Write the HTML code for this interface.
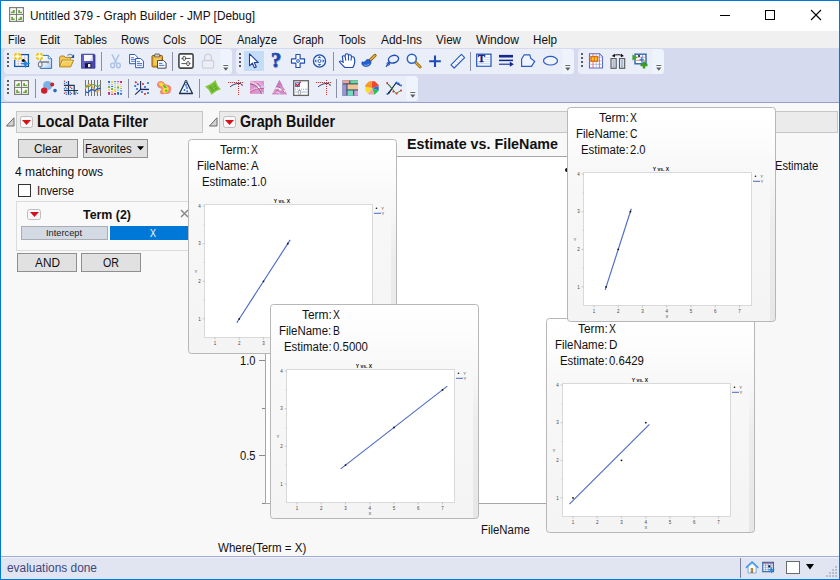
<!DOCTYPE html>
<html><head><meta charset="utf-8"><title>Untitled 379 - Graph Builder - JMP</title>
<style>
html,body{margin:0;padding:0;width:840px;height:580px;overflow:hidden;background:#f7f7f7;font-family:'Liberation Sans', sans-serif;}
.t{position:absolute;white-space:pre;transform-origin:0 0;color:#111}
svg{overflow:visible}
</style></head><body>
<div style="position:relative;width:840px;height:580px;overflow:hidden">
<div style="position:absolute;left:0;top:0;width:840px;height:580px;background:#0078d7"></div>
<div style="position:absolute;left:1px;top:1px;width:838px;height:30px;background:#fff"></div>
<div style="position:absolute;left:1px;top:31px;width:838px;height:17px;background:#f0f0f0"></div>
<div style="position:absolute;left:1px;top:48px;width:838px;height:54px;background:#d5daee"></div>
<div style="position:absolute;left:1px;top:102px;width:838px;height:1px;background:#939fce"></div>
<div style="position:absolute;left:1px;top:103px;width:838px;height:453px;background:#f8f8f8"></div>
<div style="position:absolute;left:1px;top:556px;width:838px;height:1px;background:#a0a9d2"></div>
<div style="position:absolute;left:1px;top:557px;width:838px;height:22px;background:#e0e5f1"></div>
<div style="position:absolute;left:1px;top:557px;width:838px;height:1px;background:#f0f3fa"></div>
<svg style="position:absolute;left:9px;top:7px" width="16" height="16" viewBox="0 0 16 16"><rect x=".6" y=".6" width="13.8" height="13.8" fill="#fff" stroke="#7d7d7d" stroke-width="1.2"/><path d="M7.5 .6v13.8M.6 7.5h13.8" stroke="#7d7d7d" stroke-width="1.2"/><path d="M2.2 6.2V4.6h1.6V3h1.9v3.2zM9.2 6.2V3h1.8v1.7h1.9v1.5zM2.2 13V9.8h1.8v1.6h1.7V13zM9.2 13v-1.6h1.6V9.8h2.1V13z" fill="#6aa636"/></svg>
<span class="t" style="left:30.0px;top:10.34px;font-size:12px;line-height:12px;transform:scaleX(0.9844)">Untitled 379 - Graph Builder - JMP [Debug]</span>
<svg style="position:absolute;left:700px;top:0" width="140" height="31" viewBox="0 0 140 31"><path d="M20 15.5h10" stroke="#000" stroke-width="1" fill="none"/><rect x="65.5" y="10.5" width="9" height="9" stroke="#000" fill="none"/><path d="M111 10l10 10M121 10l-10 10" stroke="#000" stroke-width="1.1" fill="none"/></svg>
<span class="t" style="left:8.3px;top:34.34px;font-size:12px;line-height:12px;transform:scaleX(0.9150)">File</span>
<span class="t" style="left:40.0px;top:34.34px;font-size:12px;line-height:12px;transform:scaleX(0.9668)">Edit</span>
<span class="t" style="left:74.0px;top:34.34px;font-size:12px;line-height:12px;transform:scaleX(0.9514)">Tables</span>
<span class="t" style="left:121.0px;top:34.34px;font-size:12px;line-height:12px;transform:scaleX(0.9328)">Rows</span>
<span class="t" style="left:163.0px;top:34.34px;font-size:12px;line-height:12px;transform:scaleX(0.9577)">Cols</span>
<span class="t" style="left:200.0px;top:34.34px;font-size:12px;line-height:12px;transform:scaleX(0.8456)">DOE</span>
<span class="t" style="left:237.0px;top:34.34px;font-size:12px;line-height:12px;transform:scaleX(0.9367)">Analyze</span>
<span class="t" style="left:292.7px;top:34.34px;font-size:12px;line-height:12px;transform:scaleX(0.9173)">Graph</span>
<span class="t" style="left:339.3px;top:34.34px;font-size:12px;line-height:12px;transform:scaleX(0.9530)">Tools</span>
<span class="t" style="left:380.7px;top:34.34px;font-size:12px;line-height:12px;transform:scaleX(0.9913)">Add-Ins</span>
<span class="t" style="left:436.0px;top:34.34px;font-size:12px;line-height:12px;transform:scaleX(0.9691)">View</span>
<span class="t" style="left:475.7px;top:34.34px;font-size:12px;line-height:12px;transform:scaleX(1.0073)">Window</span>
<span class="t" style="left:533.3px;top:34.34px;font-size:12px;line-height:12px;transform:scaleX(0.9722)">Help</span>
<div style="position:absolute;left:4px;top:48.5px;width:228px;height:25.5px;background:linear-gradient(90deg,#e9eef9 0,#e9eef9 calc(100% - 12px),#eef4fc calc(100% - 11px));border-radius:3.5px"></div>
<div style="position:absolute;left:7px;top:53px;width:2px;height:2px;background:#5c5c62"></div>
<div style="position:absolute;left:7px;top:57px;width:2px;height:2px;background:#5c5c62"></div>
<div style="position:absolute;left:7px;top:61px;width:2px;height:2px;background:#5c5c62"></div>
<div style="position:absolute;left:7px;top:65px;width:2px;height:2px;background:#5c5c62"></div>
<svg style="position:absolute;left:14px;top:53px" width="16" height="16" viewBox="0 0 16 16"><rect x=".7" y="1.600" width="13.700" height="11.800" fill="#fff" stroke="#1254a4" stroke-width="1.300"/><path d="M.7 5.200h13.700M.7 8.200h13.700M.7 10.800h13.700" stroke="#f2a0a0" stroke-width=".5"/><path d="M4.200 1.600v11.800M7.500 1.600v11.800M10.800 1.600v11.800" stroke="#86aae4" stroke-width=".5"/><path d="M11.400 6.800l1.300 2.700 3.900 1.100-3.900 1.200-1.300 3.700-1.300-3.700-4-1.200 4-1.100z" fill="#2284dc"/><circle cx="9.400" cy="7.400" r="1.500" fill="#0a0a0a"/><rect x="0" y="0" width="7" height="6.800" fill="#f2d348"/><path d="M3.500 -.3v7.400M-.3 3.400h7.600M.2 .2l6.600 6.400M6.800 .2L.2 6.600" stroke="#fffbe0" stroke-width=".8"/><path d="M1.800 0L2.600 2 .0 1.600M5.200 0L4.400 2 7 1.600M1.800 6.800L2.600 4.800 0 5.200M5.200 6.800L4.400 4.800 7 5.200" fill="#e9bf20"/><circle cx="3.500" cy="3.400" r="1.300" fill="#fffdf0"/></svg>
<svg style="position:absolute;left:36px;top:53px" width="16" height="16" viewBox="0 0 16 16"><defs><linearGradient id="pgA" x1="0" y1="0" x2="1" y2="1"><stop offset="0" stop-color="#fff"/><stop offset=".5" stop-color="#e4effa"/><stop offset="1" stop-color="#a8caee"/></linearGradient></defs><path d="M4.300 2.400h8l3.300 3.300v9.700H4.300z" fill="url(#pgA)" stroke="#2f72c2" stroke-width="1"/><path d="M12.300 2.400v3.300h3.300" fill="#f4f9fe" stroke="#2f72c2" stroke-width=".8"/><path d="M4.400 9h8.700" stroke="#7a7e86" stroke-width="1.600"/><path d="M11 9.900h2.200" stroke="#9a9ea6" stroke-width=".8"/><ellipse cx="4.200" cy="11.500" rx="1.900" ry="2.500" fill="#eef1f6" stroke="#787c84" stroke-width="1.100"/><path d="M4.300 6v3" stroke="#9a9ea6" stroke-width="1"/><rect x="0" y="0" width="7" height="6.800" fill="#f2d348"/><path d="M3.500 -.3v7.400M-.3 3.400h7.600M.2 .2l6.600 6.400M6.800 .2L.2 6.600" stroke="#fffbe0" stroke-width=".8"/><path d="M1.800 0L2.600 2 .0 1.600M5.200 0L4.400 2 7 1.600M1.800 6.800L2.600 4.800 0 5.200M5.200 6.800L4.400 4.800 7 5.200" fill="#e9bf20"/><circle cx="3.500" cy="3.400" r="1.300" fill="#fffdf0"/></svg>
<svg style="position:absolute;left:59px;top:53px" width="16" height="16" viewBox="0 0 16 16"><g transform="translate(-.9 -.3)"><path d="M1.500 14V4.500l1-1.200h3.600l1 1.400h5.400V7" fill="#f1c95a" stroke="#a97a1c" stroke-width=".9"/><path d="M1.500 14.200l2.600-6.700h11.400L12.600 14.200z" fill="#f6cf5a" stroke="#a97a1c" stroke-width=".9"/><path d="M3 13l2-4.600h9" stroke="#fbe9a6" stroke-width=".8" fill="none"/><path d="M3 13.600h9.200" stroke="#e0a020" stroke-width=".9"/><path d="M9.400 2.800c1.800-1.800 4.200-1.500 5.400.5" stroke="#7c98bc" stroke-width="1.200" fill="none"/><path d="M16 1.600v3.600h-3.400z" fill="#1c4c9c"/></g></svg>
<svg style="position:absolute;left:80px;top:53px" width="16" height="16" viewBox="0 0 16 16"><defs><linearGradient id="svA" x1="0" y1="0" x2="1" y2="0"><stop offset="0" stop-color="#6464cc"/><stop offset="1" stop-color="#4444a8"/></linearGradient></defs><path d="M1.500 1.200h12.800l.7.700v13.300H1.500z" fill="url(#svA)" stroke="#3a3a9c" stroke-width=".8"/><rect x="4" y="2" width="8.600" height="6" fill="#f6f6fb"/><path d="M9 8l3.600-4v4z" fill="#d4d8e8"/><rect x="5" y="10.200" width="6.400" height="4.600" fill="#14142c"/><rect x="8" y="11" width="2.400" height="3.200" fill="#f0f0f6"/><rect x="13.300" y="2.600" width=".9" height=".9" fill="#2c2c7c"/></svg>
<div style="position:absolute;left:101px;top:52px;width:1px;height:19px;background:#8a8fa8"></div>
<svg style="position:absolute;left:108px;top:53px" width="16" height="16" viewBox="0 0 16 16"><path d="M4 1.5l4.6 9M11 1.5l-4.6 9" stroke="#a9c1e6" stroke-width="1.5" fill="none"/><ellipse cx="4.6" cy="12.4" rx="1.9" ry="2.3" fill="none" stroke="#a9c1e6" stroke-width="1.4"/><ellipse cx="10.4" cy="12.4" rx="1.9" ry="2.3" fill="none" stroke="#a9c1e6" stroke-width="1.4"/></svg>
<svg style="position:absolute;left:129px;top:53px" width="16" height="16" viewBox="0 0 16 16"><path d="M0.6 1.5h5.2l2.6 2.6v6.6h-7.8z" fill="#fff" stroke="#2c5cb4" stroke-width="1"/><path d="M2.0 4.7h3M2.0 6.5h5M2.0 8.3h5" stroke="#3a6cc4" stroke-width=".9"/><path d="M6.6 5.5h5.2l2.6 2.6v6.6h-7.8z" fill="#fff" stroke="#2c5cb4" stroke-width="1"/><path d="M8.0 8.7h3M8.0 10.5h5M8.0 12.3h5" stroke="#3a6cc4" stroke-width=".9"/></svg>
<svg style="position:absolute;left:151px;top:53px" width="16" height="16" viewBox="0 0 16 16"><rect x="1" y="2.5" width="10.5" height="11.5" rx="1" fill="#e4aa2c" stroke="#8a5a10" stroke-width="1"/><rect x="3.6" y="1" width="5.2" height="3" rx=".8" fill="#c9c9c9" stroke="#5a4a30" stroke-width=".8"/><rect x="2.6" y="4.6" width="7.2" height="7.5" fill="#f3c95a"/><path d="M6.5 7.5h6l2.6 2.4v5.3h-8.6z" fill="#f4f6fa" stroke="#4a4a58" stroke-width="1"/><path d="M8 10.4h3.4M8 12.4h5.4" stroke="#3a6cc4" stroke-width=".9"/></svg>
<div style="position:absolute;left:172px;top:52px;width:1px;height:19px;background:#8a8fa8"></div>
<svg style="position:absolute;left:178px;top:53px" width="16" height="16" viewBox="0 0 16 16"><rect x=".9" y=".9" width="14.2" height="14.2" rx="1.6" fill="#fff" stroke="#464646" stroke-width="1.6"/><path d="M3.4 5.4h9.2M3.4 10.6h9.2" stroke="#555" stroke-width="1"/><rect x="5" y="3.4" width="2.4" height="4" rx="1" fill="#fff" stroke="#444" stroke-width="1"/><rect x="8.8" y="8.6" width="2.4" height="4" rx="1" fill="#fff" stroke="#444" stroke-width="1"/></svg>
<svg style="position:absolute;left:200px;top:53px" width="16" height="16" viewBox="0 0 16 16"><path d="M4.6 7.5V4.6a3.4 3.4 0 0 1 6.8 0V7.5" fill="none" stroke="#cfd0da" stroke-width="1.3"/><rect x="2.4" y="7.5" width="11.2" height="7.6" rx="1" fill="#eceef6" stroke="#cfd0da" stroke-width="1.3"/></svg>
<svg style="position:absolute;left:223px;top:64.5px" width="6" height="7" viewBox="0 0 6 7"><path d="M.3 .6h5" stroke="#fff" stroke-width="2.400" opacity=".7"/><path d="M.3 .5h5" stroke="#666"/><path d="M.2 2.400h5.200L2.800 5.800z" fill="#5e5e5e"/></svg>
<div style="position:absolute;left:236px;top:48.5px;width:338px;height:25.5px;background:linear-gradient(90deg,#e9eef9 0,#e9eef9 calc(100% - 12px),#eef4fc calc(100% - 11px));border-radius:3.5px"></div>
<div style="position:absolute;left:239px;top:53px;width:2px;height:2px;background:#5c5c62"></div>
<div style="position:absolute;left:239px;top:57px;width:2px;height:2px;background:#5c5c62"></div>
<div style="position:absolute;left:239px;top:61px;width:2px;height:2px;background:#5c5c62"></div>
<div style="position:absolute;left:239px;top:65px;width:2px;height:2px;background:#5c5c62"></div>
<div style="position:absolute;left:244px;top:51px;width:20px;height:20px;background:#c5dcf7"></div>
<svg style="position:absolute;left:246px;top:53px" width="16" height="16" viewBox="0 0 16 16"><path d="M3.5 .8v12l2.9-2.6 2 4.6 1.9-.8-2-4.5h3.9z" fill="#fff" stroke="#1c3fa0" stroke-width="1.1" stroke-linejoin="round"/></svg>
<svg style="position:absolute;left:268px;top:53px" width="16" height="16" viewBox="0 0 16 16"><text x="8.6" y="14.6" font-family="'Liberation Serif',serif" font-weight="bold" font-size="20.5" text-anchor="middle" fill="#b9bccb" stroke="#b9bccb" stroke-width=".7">?</text><text x="8" y="14" font-family="'Liberation Serif',serif" font-weight="bold" font-size="20.5" text-anchor="middle" fill="#1a49b4" stroke="#1a49b4" stroke-width=".7">?</text></svg>
<svg style="position:absolute;left:290px;top:53px" width="16" height="16" viewBox="0 0 16 16"><path d="M5.900 1.500h4.200v4.400h4.400v4.200h-4.400v4.400H5.900v-4.400H1.500V5.900h4.400z" fill="#fff" stroke="#1c4cb4" stroke-width="1.150" stroke-linejoin="round"/><circle cx="8" cy="8" r="1.400" fill="#e4eefc" stroke="#1c4cb4" stroke-width=".9"/></svg>
<svg style="position:absolute;left:311px;top:53px" width="16" height="16" viewBox="0 0 16 16"><circle cx="8.500" cy="8" r="6.100" fill="#edf3fd" stroke="#1c4cb4" stroke-width="1.250"/><circle cx="8.500" cy="8" r="1.500" fill="#fff" stroke="#1c4cb4" stroke-width=".9"/><path d="M8.500 2.900l1.700 2h-3.400zM8.500 13.100l1.700-2h-3.400zM3.400 8l2-1.700v3.400zM13.600 8l-2-1.700v3.400z" fill="#2a5cc0"/></svg>
<div style="position:absolute;left:333px;top:52px;width:1px;height:19px;background:#8a8fa8"></div>
<svg style="position:absolute;left:339px;top:53px" width="16" height="16" viewBox="0 0 16 16"><g transform="translate(-.4 0) scale(1.18 1)"><path d="M5.200 14.600C4 12.400 1.600 10.800 .7 8.600c.9-1.100 2.200-.5 3.200.9L3.200 3.600c.4-1.200 1.800-1.200 2.200-.1L5.800 1.500c.5-1.100 2-1.100 2.400 0l.2 1c.6-1 2.100-.9 2.400.3l.1 1.500c.7-.9 2.100-.7 2.400.5.700 3.400.5 6.600-1.300 9.800z" fill="#fff" stroke="#1c4cb4" stroke-width="1" stroke-linejoin="round"/><path d="M5.600 3.600l.5 4M8.300 2.600l.1 4.800M10.800 4.200l-.3 3.400" stroke="#1c4cb4" stroke-width=".9"/></g></svg>
<svg style="position:absolute;left:361px;top:53px" width="16" height="16" viewBox="0 0 16 16"><path d="M9.200 7.200L14 2.400" stroke="#8a5a10" stroke-width="3.200" stroke-linecap="round"/><path d="M9.400 7L13.800 2.600" stroke="#e8b030" stroke-width="1.700" stroke-linecap="round"/><path d="M1.200 8.800c1.300 1 2.800.3 3.600-1.200 1.700-2.400 5.500-.6 5.200 2.200-.4 3.200-4.400 4.200-7 3.300-1.700-.6-2.700-2.500-1.800-4.300z" fill="#1f62d4" stroke="#143c9c" stroke-width=".7"/><path d="M3 11.800c1.600.9 4 .6 5.200-.8" stroke="#7fb0f2" stroke-width="1" fill="none"/></svg>
<svg style="position:absolute;left:384px;top:53px" width="16" height="16" viewBox="0 0 16 16"><ellipse cx="9.500" cy="6.200" rx="5.200" ry="3.700" transform="rotate(-18 9.500 6.200)" fill="none" stroke="#1c4cb4" stroke-width="1.400"/><path d="M5.600 9.200L2 13.800" stroke="#1c4cb4" stroke-width="1.300"/><circle cx="4.400" cy="10.800" r="1.400" fill="none" stroke="#1c4cb4" stroke-width="1"/></svg>
<svg style="position:absolute;left:406px;top:53px" width="16" height="16" viewBox="0 0 16 16"><path d="M9 8.800l5.200 5.200" stroke="#8a5a10" stroke-width="2.800" stroke-linecap="round"/><path d="M9.200 9l5 5" stroke="#e8b030" stroke-width="1.300" stroke-linecap="round"/><circle cx="5.800" cy="5.800" r="4.500" fill="#f2f8ff" stroke="#2a62c4" stroke-width="1.500"/></svg>
<svg style="position:absolute;left:427px;top:53px" width="16" height="16" viewBox="0 0 16 16"><path d="M8 2.400v11.600M2.200 8.200h11.600" stroke="#1c4cb4" stroke-width="2.100"/></svg>
<svg style="position:absolute;left:450px;top:53px" width="16" height="16" viewBox="0 0 16 16"><path d="M1 11.800L11.400 1.400l3.200 3.200L4.200 15z" fill="#fff" stroke="#2a5cc0" stroke-width="1.200" stroke-linejoin="round"/><path d="M4.400 10.600l1.200 1.200M6.400 8.600l1.200 1.200M8.400 6.600l1.200 1.200M10.400 4.600l1.200 1.200" stroke="#7fa0dc" stroke-width=".7"/></svg>
<div style="position:absolute;left:470px;top:52px;width:1px;height:19px;background:#8a8fa8"></div>
<svg style="position:absolute;left:476px;top:53px" width="16" height="16" viewBox="0 0 16 16"><rect x=".7" y="1.200" width="14.300" height="12" fill="#fff" stroke="#2a5cc0" stroke-width="1.300"/><path d="M8.500 4.500h5.500M8.500 6.500h5.500M2 8.500h12M2 10.500h12M2 12.200h12" stroke="#c6d6f0" stroke-width=".9"/><text x="5.400" y="9" font-family="'Liberation Serif',serif" font-weight="bold" font-size="10.500" text-anchor="middle" fill="#101c80" stroke="#101c80" stroke-width=".4">T</text></svg>
<svg style="position:absolute;left:498px;top:53px" width="16" height="16" viewBox="0 0 16 16"><path d="M1 3.200h14" stroke="#14288c" stroke-width="2.600"/><path d="M1 7.400h14" stroke="#14288c" stroke-width="1.500"/><path d="M1 11.200h12" stroke="#14288c" stroke-width="1.100"/><path d="M11.800 8.600l4 2.600-4 2.600z" fill="#14288c"/></svg>
<svg style="position:absolute;left:520px;top:53px" width="16" height="16" viewBox="0 0 16 16"><path d="M4.200 1.800h5.600l.9 3.400 4 3.200-3.200 5H1.600V6z" fill="#f0f5fd" stroke="#2a5cc0" stroke-width="1.200" stroke-linejoin="round"/></svg>
<svg style="position:absolute;left:542px;top:53px" width="16" height="16" viewBox="0 0 16 16"><ellipse cx="8.500" cy="7.700" rx="7" ry="4.300" fill="#eef3fc" stroke="#2a5cc0" stroke-width="1.200"/></svg>
<svg style="position:absolute;left:565.3px;top:64.5px" width="6" height="7" viewBox="0 0 6 7"><path d="M.3 .6h5" stroke="#fff" stroke-width="2.400" opacity=".7"/><path d="M.3 .5h5" stroke="#666"/><path d="M.2 2.400h5.200L2.800 5.800z" fill="#5e5e5e"/></svg>
<div style="position:absolute;left:578px;top:48.5px;width:86px;height:25.5px;background:linear-gradient(90deg,#e9eef9 0,#e9eef9 calc(100% - 12px),#eef4fc calc(100% - 11px));border-radius:3.5px"></div>
<div style="position:absolute;left:581px;top:53px;width:2px;height:2px;background:#5c5c62"></div>
<div style="position:absolute;left:581px;top:57px;width:2px;height:2px;background:#5c5c62"></div>
<div style="position:absolute;left:581px;top:61px;width:2px;height:2px;background:#5c5c62"></div>
<div style="position:absolute;left:581px;top:65px;width:2px;height:2px;background:#5c5c62"></div>
<svg style="position:absolute;left:588px;top:53px" width="16" height="16" viewBox="0 0 16 16"><path d="M1.500 .700h10l3 3v11.300h-13z" fill="#fff" stroke="#5a68c8" stroke-width="1.100"/><path d="M1.500 4.300h13M1.500 7.800h13M1.500 11.300h13" stroke="#9fb4e8" stroke-width=".8"/><path d="M5 .700v14.300M11.400 .700v14.300" stroke="#e05050" stroke-width=".8"/><path d="M8.200 .700v14.300" stroke="#9fb4e8" stroke-width=".8"/><rect x="3" y="3.600" width="6.600" height="4.600" fill="#f7d020" stroke="#e06a18" stroke-width="1.400"/><path d="M6.300 3.600v4.600" stroke="#e06a18" stroke-width="1"/></svg>
<svg style="position:absolute;left:610px;top:53px" width="16" height="16" viewBox="0 0 16 16"><rect x="1" y="5.600" width="5.200" height="9.700" fill="#dfeaf8" stroke="#555" stroke-width="1.100"/><path d="M2.5 8h2.200M2.5 10h2.200M2.5 12h2.200M2.5 13.800h2.200" stroke="#6a7a94" stroke-width=".8"/><rect x="9.5" y="5.600" width="5.200" height="9.700" fill="#dfeaf8" stroke="#555" stroke-width="1.100"/><path d="M11.0 8h2.200M11.0 10h2.200M11.0 12h2.200M11.0 13.800h2.200" stroke="#6a7a94" stroke-width=".8"/><path d="M3.600 2.400c2.600-.9 6-.9 8.600 0" stroke="#111" stroke-width="1" fill="none"/><path d="M1.800 3l3-2.200.2 3.400zM14 3l-3-2.200-.2 3.400z" fill="#111"/></svg>
<svg style="position:absolute;left:632px;top:53px" width="16" height="16" viewBox="0 0 16 16"><rect x="3" y="1.200" width="11" height="9.600" fill="#fff" stroke="#1d5ba8" stroke-width="1.300"/><path d="M3 4.200h11M3 7.400h11" stroke="#e36a6a" stroke-width=".7"/><path d="M10.600 1.200v9.600" stroke="#5a8ad0" stroke-width=".7"/><path d="M.4 1.400l5.200 3-5.200 3z" fill="#3aa52a"/><path d="M9.400 3.600l.8 2.400 2.600.4-2.400 1-.6 2.800-.9-2.600-2.700-.5 2.500-1z" fill="#2f86d6"/><circle cx="7" cy="3" r="1" fill="#111"/><path d="M12 8.600v7M8.500 12.100h7" stroke="#3a9a22" stroke-width="2.500"/></svg>
<svg style="position:absolute;left:655.5px;top:64.5px" width="6" height="7" viewBox="0 0 6 7"><path d="M.3 .6h5" stroke="#fff" stroke-width="2.400" opacity=".7"/><path d="M.3 .5h5" stroke="#666"/><path d="M.2 2.400h5.200L2.800 5.800z" fill="#5e5e5e"/></svg>
<div style="position:absolute;left:4px;top:76px;width:414px;height:24.5px;background:linear-gradient(90deg,#e9eef9 0,#e9eef9 calc(100% - 12px),#eef4fc calc(100% - 11px));border-radius:3.5px"></div>
<div style="position:absolute;left:7px;top:80px;width:2px;height:2px;background:#5c5c62"></div>
<div style="position:absolute;left:7px;top:84px;width:2px;height:2px;background:#5c5c62"></div>
<div style="position:absolute;left:7px;top:88px;width:2px;height:2px;background:#5c5c62"></div>
<div style="position:absolute;left:7px;top:92px;width:2px;height:2px;background:#5c5c62"></div>
<svg style="position:absolute;left:14px;top:80px" width="16" height="16" viewBox="0 0 16 16"><rect x=".6" y=".6" width="13.8" height="13.8" fill="#fff" stroke="#7d7d7d" stroke-width="1.2"/><path d="M7.5 .6v13.8M.6 7.5h13.8" stroke="#7d7d7d" stroke-width="1.2"/><path d="M2.2 6.2V4.6h1.6V3h1.9v3.2zM9.2 6.2V3h1.8v1.7h1.9v1.5zM2.2 13V9.8h1.8v1.6h1.7V13zM9.2 13v-1.6h1.6V9.8h2.1V13z" fill="#6aa636"/></svg>
<div style="position:absolute;left:35px;top:79px;width:1px;height:19px;background:#8a8fa8"></div>
<svg style="position:absolute;left:41px;top:80px" width="16" height="16" viewBox="0 0 16 16"><circle cx="6.700" cy="5.600" r="4.600" fill="#7db2e8"/><circle cx="3.200" cy="10.600" r="3.200" fill="#cf1f2a"/><circle cx="11.200" cy="4.500" r="2" fill="#cf1f2a"/><circle cx="14" cy="10.600" r="1.800" fill="#2a68c0"/></svg>
<svg style="position:absolute;left:63px;top:80px" width="16" height="16" viewBox="0 0 16 16"><path d="M5.500 .9v13.800M11.200 4.900v9.800M.9 5.400h10.900M.9 10.500h14.200" stroke="#203858" stroke-width="1.200" fill="none"/><circle cx="1.5" cy="1.3" r="0.72" fill="#d83030"/><circle cx="3.5" cy="2.5" r="0.72" fill="#2a6ad0"/><circle cx="1.5" cy="3.5" r="0.72" fill="#2a6ad0"/><circle cx="2.5" cy="7.3" r="0.72" fill="#d83030"/><circle cx="1.5" cy="8.7" r="0.72" fill="#2a6ad0"/><circle cx="3.8" cy="8.7" r="0.72" fill="#2a6ad0"/><circle cx="7.5" cy="7.3" r="0.72" fill="#d83030"/><circle cx="8.7" cy="8.5" r="0.72" fill="#2a6ad0"/><circle cx="1.5" cy="13.3" r="0.72" fill="#d83030"/><circle cx="3" cy="12.2" r="0.72" fill="#2a6ad0"/><circle cx="3.5" cy="14.3" r="0.72" fill="#2a6ad0"/><circle cx="7.2" cy="12.2" r="0.72" fill="#2a6ad0"/><circle cx="8.5" cy="13.5" r="0.72" fill="#d83030"/><circle cx="7.2" cy="14.5" r="0.72" fill="#2a6ad0"/><circle cx="12.5" cy="14" r="0.72" fill="#d83030"/><circle cx="13" cy="12.2" r="0.72" fill="#2a6ad0"/><circle cx="14.6" cy="13.4" r="0.72" fill="#2a6ad0"/></svg>
<svg style="position:absolute;left:85px;top:80px" width="16" height="16" viewBox="0 0 16 16"><path d="M.5 0v16M3.500 0v16M6.500 0v16M9.500 0v16M12.500 0v16M15.500 0v16" stroke="#727272" stroke-width="1"/><path d="M.3 8.500C1.500 6 3 4.300 4.800 4.500s3.200 3 5 5.500 2.500 2 3.200 .800 1.500-1 2.500-.8" stroke="#f0a030" stroke-width="1.300" fill="none"/><path d="M.3 5.300c1 .5 2 2 3.200 1.500s3-2.500 5-2.300 2.500 2.300 4 2 2-1.500 3.200-1.500" stroke="#5fa040" stroke-width="1.200" fill="none"/><path d="M.3 11.500c1 .5 1.500 1.300 2.500 1s2.500-3 4-3 2.300 1.300 3.500 1 1.500-2 2.700-2h2.800" stroke="#2060d0" stroke-width="1.300" fill="none"/></svg>
<svg style="position:absolute;left:107px;top:80px" width="16" height="16" viewBox="0 0 16 16"><rect x="1.1" y="1" width="1.900" height="1.9" rx=".3" fill="#1f64d0"/><rect x="1.1" y="4.2" width="1.900" height="0.7" rx=".3" fill="#74aaf0"/><rect x="1.1" y="6" width="1.900" height="2.0" rx=".3" fill="#6fae40"/><rect x="1.1" y="8.9" width="1.900" height="1.6" rx=".3" fill="#f6d233"/><rect x="1.1" y="12" width="1.900" height="2.8" rx=".3" fill="#cc1484"/><rect x="4.1" y="1" width="1.900" height="1.9" rx=".3" fill="#f6d233"/><rect x="4.1" y="4.2" width="1.900" height="0.7" rx=".3" fill="#74aaf0"/><rect x="4.1" y="6" width="1.900" height="1.0" rx=".3" fill="#1f64d0"/><rect x="4.1" y="8" width="1.900" height="2.0" rx=".3" fill="#6fae40"/><rect x="4.1" y="11" width="1.900" height="2.0" rx=".3" fill="#f6d233"/><rect x="4.1" y="13.8" width="1.900" height="1.0" rx=".3" fill="#cc1484"/><rect x="7.1" y="1" width="1.900" height="0.8" rx=".3" fill="#1f64d0"/><rect x="7.1" y="2.8" width="1.900" height="0.8" rx=".3" fill="#74aaf0"/><rect x="7.1" y="4.8" width="1.900" height="0.8" rx=".3" fill="#f6d233"/><rect x="7.1" y="6.8" width="1.900" height="0.8" rx=".3" fill="#6fae40"/><rect x="7.1" y="9" width="1.900" height="3.0" rx=".3" fill="#f6d233"/><rect x="7.1" y="13" width="1.900" height="1.8" rx=".3" fill="#cc1484"/><rect x="10.1" y="1" width="1.900" height="0.8" rx=".3" fill="#cc1484"/><rect x="10.1" y="2.8" width="1.900" height="0.6" rx=".3" fill="#f08a90"/><rect x="10.1" y="4.8" width="1.900" height="0.7" rx=".3" fill="#f6d233"/><rect x="10.1" y="6.5" width="1.900" height="2.0" rx=".3" fill="#6fae40"/><rect x="10.1" y="9.8" width="1.900" height="0.7" rx=".3" fill="#74aaf0"/><rect x="10.1" y="12" width="1.900" height="2.8" rx=".3" fill="#1f64d0"/><rect x="13.1" y="1" width="1.900" height="1.9" rx=".3" fill="#cc1484"/><rect x="13.1" y="4" width="1.900" height="0.6" rx=".3" fill="#f08a90"/><rect x="13.1" y="6" width="1.900" height="1.0" rx=".3" fill="#f6d233"/><rect x="13.1" y="8" width="1.900" height="0.8" rx=".3" fill="#6fae40"/><rect x="13.1" y="10" width="1.900" height="1.8" rx=".3" fill="#74aaf0"/><rect x="13.1" y="13" width="1.900" height="1.8" rx=".3" fill="#1f64d0"/></svg>
<div style="position:absolute;left:128px;top:79px;width:1px;height:19px;background:#8a8fa8"></div>
<svg style="position:absolute;left:134px;top:80px" width="16" height="16" viewBox="0 0 16 16"><path d="M6.600 .9v8.500L1.100 14.700" stroke="#1c2c5c" stroke-width="1.100" fill="none"/><path d="M6.600 9.400h8.400" stroke="#1c2c5c" stroke-width="1.400" fill="none"/><circle cx="1.8" cy="2.2" r="1.05" fill="#d83030"/><circle cx="3.8" cy="4.2" r="1.05" fill="#2a6ad0"/><circle cx="1.2" cy="6" r="1.05" fill="#2a6ad0"/><circle cx="3" cy="9" r="1.05" fill="#2a6ad0"/><circle cx="9" cy="4" r="1.05" fill="#d83030"/><circle cx="14" cy="3" r="1.05" fill="#2a6ad0"/><circle cx="11" cy="7" r="1.05" fill="#2a6ad0"/><circle cx="8" cy="12" r="1.05" fill="#2a6ad0"/><circle cx="11" cy="14" r="1.05" fill="#d83030"/><circle cx="14" cy="13" r="1.05" fill="#2a6ad0"/></svg>
<svg style="position:absolute;left:156px;top:80px" width="16" height="16" viewBox="0 0 16 16"><path d="M1.200 3.600C1.800 1 5 .3 7 1.600c1.200 1 1.600 2.400 3.200 2.800 2.200.2 4.600.8 5 3.200.4 2-.8 3-.6 4.400-.6 2-3.400 2.200-5 1.800-2 .6-5.400.8-5.800-1.400-.2-1.600 1.600-2.400 2-3.400C4.600 8 3 8.600 1.800 7 .8 5.800 .8 4.600 1.200 3.600z" fill="#f4887c"/><path d="M3 3.400c.8-1.400 3.200-1.200 4 .2.800 1.400 2.400 2 3.800 2.600 1.600.8 2.200 2.400 1.600 4-.6 1.800-2.200 3-4 2.800-1.600-.2-2.400-1.400-1.800-2.800.6-1.200 1-2.400-.2-3.400C5.200 5.800 2.400 5.200 3 3.400z" fill="#f6e42c"/><path d="M6.800 4.800c1.400.2 3 1.200 4 2.600-.4.800-1.200 1-2 .6-1-.6-2-1.800-2-3.200zM10.200 9l.5 1.100 1.200.1-1 .8.200 1.200-.9-.7-1.100.5.400-1.100-.8-.9 1.200 0z" fill="#48c030"/></svg>
<svg style="position:absolute;left:178px;top:80px" width="16" height="16" viewBox="0 0 16 16"><path d="M7.300 2L1.500 13.500h13L8.700 2" fill="#f0f4fc" stroke="#1c3050" stroke-width="1.300" stroke-linejoin="round"/><ellipse cx="8" cy="1.500" rx="1" ry="1.100" fill="#f0f4fc" stroke="#1c3050" stroke-width="1"/><circle cx="8" cy="5" r="0.9" fill="#2a6ad0"/><circle cx="9" cy="8" r="0.9" fill="#2a6ad0"/><circle cx="6.5" cy="10" r="0.9" fill="#2a6ad0"/><circle cx="9.2" cy="11.2" r="0.9" fill="#2a6ad0"/><circle cx="8.4" cy="6.6" r="0.9" fill="#6aa0e8"/></svg>
<div style="position:absolute;left:199px;top:79px;width:1px;height:19px;background:#8a8fa8"></div>
<svg style="position:absolute;left:205px;top:80px" width="16" height="16" viewBox="0 0 16 16"><path d="M.1 6.600Q6 4.600 10.700 .1Q12 6 15.900 9.300Q10.500 10.800 6.400 14.700Q4.600 9.800 .1 6.600z" fill="#86c842"/><path d="M3.500 6.800Q7 5.600 10 2.800Q10.800 6.400 13 8.800Q9.600 10 7 12.400Q5.800 9 3.500 6.800z" fill="#64ae2c"/><path d="M6 7.200l4-2.600M7 9.400l4.200-2.400M7.600 4.800l2 5.400" stroke="#8ed04c" stroke-width=".6" fill="none"/></svg>
<svg style="position:absolute;left:228px;top:80px" width="16" height="16" viewBox="0 0 16 16"><path d="M0 2.500h15" stroke="#e02c2c" stroke-width="1" stroke-dasharray="1 1"/><path d="M10.500 0v15" stroke="#e02c2c" stroke-width="1" stroke-dasharray="1 1"/><path d="M2.100 6.900C4.400 5 6.600 4 8.600 3.700c1.400-.3 2.600-.4 3.600-.2.900.4 1.600 1 2.300 1.800" stroke="#22345c" stroke-width="1" fill="none"/><path d="M14.700 5.600l-1.700-.3 1.200-1.100z" fill="#22345c"/></svg>
<svg style="position:absolute;left:249px;top:80px" width="16" height="16" viewBox="0 0 16 16"><rect x="1" y=".9" width="14" height="13" fill="#dc94cc"/><path d="M1 2.200C6 2.600 11 6 13.600 13.900" stroke="#f8c4dc" stroke-width="2" fill="none"/><path d="M7 .9c3.500 1.400 6.500 4 8 7.500" stroke="#e8b0dc" stroke-width="1.600" fill="none"/><path d="M6.500 9.800C9 8 12 7 15 6.800" stroke="#ccc6f6" stroke-width="2" fill="none"/><path d="M8.600 6.600l2.400 0 .8 1.600-2.600.4z" fill="#fff"/><path d="M1 3.800C6 4.400 10.500 8 12.600 13.900" stroke="#4c4488" stroke-width=".7" fill="none"/><path d="M8 3c2.400 2.400 4.200 5.400 5.200 9" stroke="#7c5ca8" stroke-width=".7" fill="none"/><path d="M1 12.800C4 10 8 8.400 15 8.400" stroke="#d84868" stroke-width=".8" fill="none"/><path d="M1 11C3.500 9.200 6 8.400 8.600 8" stroke="#e4c4f0" stroke-width="1" fill="none"/></svg>
<svg style="position:absolute;left:272px;top:80px" width="16" height="16" viewBox="0 0 16 16"><path d="M7.400 0L15.200 14.400H-.1z" fill="#d48cc6"/><path d="M7.400 0l3 5.600H4.500z" fill="#c27cbc"/><path d="M3.400 8.400c3.400-1 6.600.2 9.600 3.400" stroke="#fbe0f0" stroke-width="1.600" fill="none"/><path d="M1.200 12.600c2.400-1.400 5-1.200 7 1.800" stroke="#d4c4f4" stroke-width="1.400" fill="none"/><path d="M4.400 6.400c3 .4 5.600 2.400 7.400 5.600" stroke="#5c4c98" stroke-width=".7" fill="none"/><path d="M1 14c3-3.400 7.400-5.200 11.600-4.600" stroke="#e05878" stroke-width=".7" fill="none"/><path d="M6.800 9.200l2.200-.4 1 1.400-2.400.4z" fill="#fff"/></svg>
<svg style="position:absolute;left:293px;top:80px" width="16" height="16" viewBox="0 0 16 16"><rect x=".7" y=".7" width="14.700" height="14.700" fill="#fff" stroke="#646464" stroke-width="1.300"/><rect x="2.400" y="2.800" width="4" height="3.800" fill="#dce8f8" stroke="#3a68c0" stroke-width=".9"/><path d="M3 4.200l1.500 1.900L7.600 1.700" stroke="#d01838" stroke-width="1.200" fill="none"/><path d="M2.500 8.600v1.400M4.500 8.600v1.400M6.500 8.600v1.400M8.500 8.600v1.400M10.500 8.600v1.400M12.500 8.600v1.400M13.800 8.600v1.400" stroke="#9abce8" stroke-width=".9"/><path d="M2 12h12" stroke="#9abce8" stroke-width="1"/><rect x="5.800" y="10.400" width="1.600" height="4.200" fill="#fff" stroke="#888" stroke-width=".6"/></svg>
<svg style="position:absolute;left:316px;top:80px" width="16" height="16" viewBox="0 0 16 16"><path d="M0 2.500h15" stroke="#e02c2c" stroke-width="1" stroke-dasharray="1 1"/><path d="M10.500 0v15" stroke="#e02c2c" stroke-width="1" stroke-dasharray="1 1"/><path d="M2.100 6.900C4.400 5 6.600 4 8.600 3.700c1.400-.3 2.600-.4 3.600-.2.900.4 1.600 1 2.300 1.800" stroke="#22345c" stroke-width="1" fill="none"/><path d="M14.700 5.600l-1.700-.3 1.200-1.100z" fill="#22345c"/></svg>
<div style="position:absolute;left:336px;top:79px;width:1px;height:19px;background:#8a8fa8"></div>
<svg style="position:absolute;left:342px;top:80px" width="16" height="16" viewBox="0 0 16 16"><rect x=".5" y=".3" width="15.500" height="15.400" fill="#2a5868"/><rect x=".5" y=".3" width="6.800" height="3" fill="#f2a0a0"/><rect x="8.400" y=".3" width="7.600" height="3" fill="#74d4a0"/><rect x=".5" y="4.400" width="3.900" height="11.300" fill="#a090d4"/><rect x="5.500" y="4.400" width="10.500" height="5" fill="#f2c494"/><rect x="5.500" y="10.500" width="5.600" height="5.200" fill="#74dcbc"/><rect x="12.200" y="10.500" width="3.800" height="5.200" fill="#d4a0dc"/></svg>
<svg style="position:absolute;left:364px;top:80px" width="16" height="16" viewBox="0 0 16 16"><path d="M8 7.9L7.7 1.2L10.8 1.2L14.7 5.1L14.7 6.2z" fill="#f04830"/><path d="M8 7.9L14.7 6.2L14.7 10.4z" fill="#2868d8"/><path d="M8 7.9L14.7 10.4L14.7 10.7L10.8 14.6L10.2 14.6z" fill="#28c850"/><path d="M8 7.9L10.2 14.6L5.2 14.6L4.0 13.5z" fill="#f4a0b8"/><path d="M8 7.9L4.0 13.5L1.3 10.7L1.3 6.8z" fill="#f8e028"/><path d="M8 7.9L1.3 6.8L1.3 5.1L5.2 1.2L7.7 1.2z" fill="#f89828"/></svg>
<svg style="position:absolute;left:386px;top:80px" width="16" height="16" viewBox="0 0 16 16"><path d="M1 3.200L6 8.500 1.200 14" stroke="#14244c" stroke-width="1" fill="none"/><path d="M2.500 14L6 8.500l4-5.500 4.500 2.500" stroke="#14244c" stroke-width="1.200" fill="none"/><path d="M3 4.500L6 8.500l4 5 5-3" stroke="#40a030" stroke-width="1" fill="none"/><circle cx="1.2" cy="3" r="1" fill="#d83030"/><circle cx="10.6" cy="2.6" r="1" fill="#2a6ad0"/><circle cx="15" cy="5.4" r="1" fill="#2a6ad0"/><circle cx="1.4" cy="14" r="1" fill="#2a6ad0"/><circle cx="7.4" cy="11.4" r="1" fill="#d83030"/><circle cx="10.6" cy="13.6" r="1" fill="#d83030"/><circle cx="15" cy="10.4" r="1" fill="#d83030"/><circle cx="12.6" cy="3.6" r="1" fill="#2a6ad0"/></svg>
<svg style="position:absolute;left:409.6px;top:92px" width="6" height="7" viewBox="0 0 6 7"><path d="M.3 .6h5" stroke="#fff" stroke-width="2.400" opacity=".7"/><path d="M.3 .5h5" stroke="#666"/><path d="M.2 2.400h5.200L2.800 5.800z" fill="#5e5e5e"/></svg>
<div style="position:absolute;left:16px;top:111px;width:187px;height:22px;box-sizing:border-box;background:#ebebeb;border:1px solid #c6c6c6"></div>
<svg style="position:absolute;left:5px;top:117px" width="10" height="10" viewBox="0 0 10 10"><path d="M9 .8V9H1.4z" fill="#d2d2d2" stroke="#6a6a6a" stroke-width="1" stroke-linejoin="round"/></svg>
<div style="position:absolute;left:20px;top:116px;width:13px;height:12px;box-sizing:border-box;border:1px solid #bdbdbd;border-radius:2.5px;background:#f8f8f8"></div>
<svg style="position:absolute;left:22.0px;top:119.5px" width="9" height="5" viewBox="0 0 9 5"><path d="M0 0h9L4.5 5z" fill="#d8101c"/></svg>
<span class="t" style="left:37.0px;top:114.16px;font-size:16px;line-height:16px;font-weight:bold;transform:scaleX(0.8917)">Local Data Filter</span>
<div style="position:absolute;left:219px;top:111px;width:619px;height:22px;box-sizing:border-box;background:#ebebeb;border:1px solid #c6c6c6"></div>
<svg style="position:absolute;left:208px;top:117px" width="10" height="10" viewBox="0 0 10 10"><path d="M9 .8V9H1.4z" fill="#d2d2d2" stroke="#6a6a6a" stroke-width="1" stroke-linejoin="round"/></svg>
<div style="position:absolute;left:223px;top:116px;width:13px;height:12px;box-sizing:border-box;border:1px solid #bdbdbd;border-radius:2.5px;background:#f8f8f8"></div>
<svg style="position:absolute;left:225.0px;top:119.5px" width="9" height="5" viewBox="0 0 9 5"><path d="M0 0h9L4.5 5z" fill="#d8101c"/></svg>
<span class="t" style="left:240.0px;top:114.16px;font-size:16px;line-height:16px;font-weight:bold;transform:scaleX(0.8905)">Graph Builder</span>
<div style="position:absolute;left:18px;top:139px;width:60px;height:19px;box-sizing:border-box;background:#e1e1e1;border:1px solid #8f8f8f"></div>
<span class="t" style="left:34.0px;top:143.34px;font-size:12px;line-height:12px;transform:scaleX(0.9760)">Clear</span>
<div style="position:absolute;left:83px;top:139px;width:65px;height:19px;box-sizing:border-box;background:#e1e1e1;border:1px solid #8f8f8f"></div>
<span class="t" style="left:85.2px;top:143.34px;font-size:12px;line-height:12px;transform:scaleX(0.9481)">Favorites</span>
<svg style="position:absolute;left:137.3px;top:146px" width="7" height="5" viewBox="0 0 8 5"><path d="M0 0h8L4 4.5z" fill="#000"/></svg>
<span class="t" style="left:15.0px;top:165.84px;font-size:12px;line-height:12px;transform:scaleX(1.0072)">4 matching rows</span>
<div style="position:absolute;left:18px;top:184px;width:13px;height:13px;box-sizing:border-box;background:#fff;border:1px solid #333"></div>
<span class="t" style="left:37.0px;top:184.84px;font-size:12px;line-height:12px;transform:scaleX(0.9401)">Inverse</span>
<div style="position:absolute;left:16px;top:201px;width:190px;height:50px;box-sizing:border-box;background:#f9f9f9;border:1px solid #dcdcdc"></div>
<div style="position:absolute;left:27px;top:208.5px;width:14px;height:11.5px;box-sizing:border-box;border:1px solid #bdbdbd;border-radius:2.5px;background:#f8f8f8"></div>
<svg style="position:absolute;left:29.5px;top:211.75px" width="9" height="5" viewBox="0 0 9 5"><path d="M0 0h9L4.5 5z" fill="#d8101c"/></svg>
<span class="t" style="left:83.0px;top:208.92px;font-size:12.5px;line-height:12.5px;font-weight:bold;transform:scaleX(0.9919)">Term (2)</span>
<svg style="position:absolute;left:180px;top:209px" width="9" height="9" viewBox="0 0 9 9"><path d="M1 1l7 7M8 1l-7 7" stroke="#8c8c8c" stroke-width="1.6" fill="none"/></svg>
<div style="position:absolute;left:21px;top:226px;width:87px;height:14px;box-sizing:border-box;background:#d3dae3;border:1px solid #a9adb3"></div>
<span class="t" style="left:46.0px;top:228.46px;font-size:9.5px;line-height:9.5px;color:#222;transform:scaleX(0.9738)">Intercept</span>
<div style="position:absolute;left:110px;top:226px;width:90px;height:14px;background:#0078d7"></div>
<span class="t" style="left:149.5px;top:229.03px;font-size:10px;line-height:10px;color:#fff;transform:scaleX(0.8993)">X</span>
<div style="position:absolute;left:17px;top:253px;width:60px;height:19px;box-sizing:border-box;background:#e1e1e1;border:1px solid #8f8f8f"></div>
<span class="t" style="left:35.0px;top:257.34px;font-size:12px;line-height:12px;transform:scaleX(0.9864)">AND</span>
<div style="position:absolute;left:81px;top:253px;width:60px;height:19px;box-sizing:border-box;background:#e1e1e1;border:1px solid #8f8f8f"></div>
<span class="t" style="left:103.0px;top:257.34px;font-size:12px;line-height:12px;transform:scaleX(0.8889)">OR</span>
<span class="t" style="left:407.0px;top:136.20px;font-size:15px;line-height:15px;font-weight:bold;transform:scaleX(0.9532)">Estimate vs. FileName</span>
<div style="position:absolute;left:265px;top:156px;width:485px;height:348px;box-sizing:border-box;background:#fff;border:1px solid #a6a6a6"></div>
<div style="position:absolute;left:259px;top:360px;width:6px;height:1px;background:#8a8a8a"></div>
<div style="position:absolute;left:262px;top:408px;width:3px;height:1px;background:#8a8a8a"></div>
<div style="position:absolute;left:259px;top:455px;width:6px;height:1px;background:#8a8a8a"></div>
<div style="position:absolute;left:262px;top:503px;width:3px;height:1px;background:#8a8a8a"></div>
<span class="t" style="left:240.0px;top:354.92px;font-size:12.5px;line-height:12.5px;transform:scaleX(0.8913)">1.0</span>
<span class="t" style="left:240.0px;top:449.92px;font-size:12.5px;line-height:12.5px;transform:scaleX(0.8913)">0.5</span>
<span class="t" style="left:481.4px;top:524.04px;font-size:12px;line-height:12px;transform:scaleX(0.9502)">FileName</span>
<span class="t" style="left:774.7px;top:159.84px;font-size:12px;line-height:12px;transform:scaleX(0.9274)">Estimate</span>
<span class="t" style="left:218.0px;top:542.34px;font-size:12px;line-height:12px;transform:scaleX(0.9631)">Where(Term = X)</span>
<div style="position:absolute;left:565.1px;top:167.6px;width:4.8px;height:4.8px;background:#111;border-radius:50%"></div>
<div style="position:absolute;left:188px;top:139px;width:209px;height:215px;box-sizing:border-box;border:1px solid #b7b7b7;border-radius:3.5px;background:linear-gradient(#fff 0%,#fdfdfd 12%,#f8f8f8 28%,#f4f4f4 100%);overflow:hidden"><div style="position:absolute;right:0;top:0;width:5px;height:213px;background:linear-gradient(rgba(0,0,0,0) 30%,rgba(0,0,0,.04) 55%,rgba(0,0,0,.055))"></div></div>
<span class="t" style="left:219.8px;top:143.84px;font-size:12px;line-height:12px;transform:scaleX(0.9933)">Term:</span>
<span class="t" style="left:251.3px;top:143.84px;font-size:12px;line-height:12px;transform:scaleX(0.8608)">X</span>
<span class="t" style="left:197.4px;top:159.84px;font-size:12px;line-height:12px;transform:scaleX(0.9545)">FileName:</span>
<span class="t" style="left:251.3px;top:159.84px;font-size:12px;line-height:12px;transform:scaleX(0.9606)">A</span>
<span class="t" style="left:202.0px;top:175.84px;font-size:12px;line-height:12px;transform:scaleX(0.9517)">Estimate:</span>
<span class="t" style="left:251.3px;top:175.84px;font-size:12px;line-height:12px;transform:scaleX(0.9312)">1.0</span>
<svg style="position:absolute;left:188px;top:139px" width="209" height="215" viewBox="0 0 209 215" font-family="'Liberation Sans', sans-serif"><rect x="16.5" y="65.5" width="168" height="133" fill="#fff" stroke="#d9d9d9"/><text x="94" y="63.6" font-size="5" font-weight="bold" text-anchor="middle" fill="#111">Y vs. X</text><path d="M14.5 179.9h2" stroke="#aaa" stroke-width=".6"/><text x="12.8" y="181.5" font-size="4.5" text-anchor="end" fill="#454545">1</text><path d="M14.5 142.3h2" stroke="#aaa" stroke-width=".6"/><text x="12.8" y="143.9" font-size="4.5" text-anchor="end" fill="#454545">2</text><path d="M14.5 104.7h2" stroke="#aaa" stroke-width=".6"/><text x="12.8" y="106.3" font-size="4.5" text-anchor="end" fill="#454545">3</text><path d="M14.5 67.1h2" stroke="#aaa" stroke-width=".6"/><text x="12.8" y="68.7" font-size="4.5" text-anchor="end" fill="#454545">4</text><path d="M15.5 161.1h1" stroke="#bbb" stroke-width=".6"/><path d="M15.5 123.5h1" stroke="#bbb" stroke-width=".6"/><path d="M15.5 85.9h1" stroke="#bbb" stroke-width=".6"/><path d="M27.0 198.5v2" stroke="#aaa" stroke-width=".6"/><text x="27.0" y="206.3" font-size="4.5" text-anchor="middle" fill="#454545">1</text><path d="M51.2 198.5v2" stroke="#aaa" stroke-width=".6"/><text x="51.2" y="206.3" font-size="4.5" text-anchor="middle" fill="#454545">2</text><path d="M75.5 198.5v2" stroke="#aaa" stroke-width=".6"/><text x="75.5" y="206.3" font-size="4.5" text-anchor="middle" fill="#454545">3</text><path d="M99.8 198.5v2" stroke="#aaa" stroke-width=".6"/><text x="99.8" y="206.3" font-size="4.5" text-anchor="middle" fill="#454545">4</text><path d="M124.0 198.5v2" stroke="#aaa" stroke-width=".6"/><text x="124.0" y="206.3" font-size="4.5" text-anchor="middle" fill="#454545">5</text><path d="M148.2 198.5v2" stroke="#aaa" stroke-width=".6"/><text x="148.2" y="206.3" font-size="4.5" text-anchor="middle" fill="#454545">6</text><path d="M172.5 198.5v2" stroke="#aaa" stroke-width=".6"/><text x="172.5" y="206.3" font-size="4.5" text-anchor="middle" fill="#454545">7</text><text x="100" y="211.3" font-size="4.2" text-anchor="middle" fill="#454545">X</text><text x="8" y="133.5" font-size="4.2" text-anchor="middle" fill="#454545">Y</text><path d="M48.8 183.7L102.2 100.9" stroke="#4e6cc2" stroke-width="1.15" fill="none"/><circle cx="51.2" cy="179.9" r=".9" fill="#111"/><circle cx="75.5" cy="142.3" r=".9" fill="#111"/><circle cx="99.8" cy="104.7" r=".9" fill="#111"/><circle cx="188.5" cy="69.3" r=".8" fill="#111"/><text x="193.2" y="70.7" font-size="4.2" fill="#454545">Y</text><path d="M186 74.3h7" stroke="#4a68c4" stroke-width="1"/><text x="193.6" y="75.7" font-size="4.2" fill="#454545">Y</text></svg>
<div style="position:absolute;left:270px;top:304px;width:209px;height:215px;box-sizing:border-box;border:1px solid #b7b7b7;border-radius:3.5px;background:linear-gradient(#fff 0%,#fdfdfd 12%,#f8f8f8 28%,#f4f4f4 100%);overflow:hidden"><div style="position:absolute;right:0;top:0;width:5px;height:213px;background:linear-gradient(rgba(0,0,0,0) 30%,rgba(0,0,0,.04) 55%,rgba(0,0,0,.055))"></div></div>
<span class="t" style="left:301.8px;top:308.84px;font-size:12px;line-height:12px;transform:scaleX(0.9933)">Term:</span>
<span class="t" style="left:333.3px;top:308.84px;font-size:12px;line-height:12px;transform:scaleX(0.8608)">X</span>
<span class="t" style="left:279.4px;top:324.84px;font-size:12px;line-height:12px;transform:scaleX(0.9545)">FileName:</span>
<span class="t" style="left:333.3px;top:324.84px;font-size:12px;line-height:12px;transform:scaleX(0.8608)">B</span>
<span class="t" style="left:284.0px;top:340.84px;font-size:12px;line-height:12px;transform:scaleX(0.9517)">Estimate:</span>
<span class="t" style="left:333.3px;top:340.84px;font-size:12px;line-height:12px;transform:scaleX(0.9522)">0.5000</span>
<svg style="position:absolute;left:270px;top:304px" width="209" height="215" viewBox="0 0 209 215" font-family="'Liberation Sans', sans-serif"><rect x="16.5" y="65.5" width="168" height="133" fill="#fff" stroke="#d9d9d9"/><text x="94" y="63.6" font-size="5" font-weight="bold" text-anchor="middle" fill="#111">Y vs. X</text><path d="M14.5 179.9h2" stroke="#aaa" stroke-width=".6"/><text x="12.8" y="181.5" font-size="4.5" text-anchor="end" fill="#454545">1</text><path d="M14.5 142.3h2" stroke="#aaa" stroke-width=".6"/><text x="12.8" y="143.9" font-size="4.5" text-anchor="end" fill="#454545">2</text><path d="M14.5 104.7h2" stroke="#aaa" stroke-width=".6"/><text x="12.8" y="106.3" font-size="4.5" text-anchor="end" fill="#454545">3</text><path d="M14.5 67.1h2" stroke="#aaa" stroke-width=".6"/><text x="12.8" y="68.7" font-size="4.5" text-anchor="end" fill="#454545">4</text><path d="M15.5 161.1h1" stroke="#bbb" stroke-width=".6"/><path d="M15.5 123.5h1" stroke="#bbb" stroke-width=".6"/><path d="M15.5 85.9h1" stroke="#bbb" stroke-width=".6"/><path d="M27.0 198.5v2" stroke="#aaa" stroke-width=".6"/><text x="27.0" y="206.3" font-size="4.5" text-anchor="middle" fill="#454545">1</text><path d="M51.2 198.5v2" stroke="#aaa" stroke-width=".6"/><text x="51.2" y="206.3" font-size="4.5" text-anchor="middle" fill="#454545">2</text><path d="M75.5 198.5v2" stroke="#aaa" stroke-width=".6"/><text x="75.5" y="206.3" font-size="4.5" text-anchor="middle" fill="#454545">3</text><path d="M99.8 198.5v2" stroke="#aaa" stroke-width=".6"/><text x="99.8" y="206.3" font-size="4.5" text-anchor="middle" fill="#454545">4</text><path d="M124.0 198.5v2" stroke="#aaa" stroke-width=".6"/><text x="124.0" y="206.3" font-size="4.5" text-anchor="middle" fill="#454545">5</text><path d="M148.2 198.5v2" stroke="#aaa" stroke-width=".6"/><text x="148.2" y="206.3" font-size="4.5" text-anchor="middle" fill="#454545">6</text><path d="M172.5 198.5v2" stroke="#aaa" stroke-width=".6"/><text x="172.5" y="206.3" font-size="4.5" text-anchor="middle" fill="#454545">7</text><text x="100" y="211.3" font-size="4.2" text-anchor="middle" fill="#454545">X</text><text x="8" y="133.5" font-size="4.2" text-anchor="middle" fill="#454545">Y</text><path d="M70.7 164.9L177.3 82.1" stroke="#4e6cc2" stroke-width="1.15" fill="none"/><circle cx="75.5" cy="161.1" r=".9" fill="#111"/><circle cx="124.0" cy="123.5" r=".9" fill="#111"/><circle cx="172.5" cy="85.9" r=".9" fill="#111"/><circle cx="188.5" cy="69.3" r=".8" fill="#111"/><text x="193.2" y="70.7" font-size="4.2" fill="#454545">Y</text><path d="M186 74.3h7" stroke="#4a68c4" stroke-width="1"/><text x="193.6" y="75.7" font-size="4.2" fill="#454545">Y</text></svg>
<div style="position:absolute;left:546px;top:318px;width:209px;height:215px;box-sizing:border-box;border:1px solid #b7b7b7;border-radius:3.5px;background:linear-gradient(#fff 0%,#fdfdfd 12%,#f8f8f8 28%,#f4f4f4 100%);overflow:hidden"><div style="position:absolute;right:0;top:0;width:5px;height:213px;background:linear-gradient(rgba(0,0,0,0) 30%,rgba(0,0,0,.04) 55%,rgba(0,0,0,.055))"></div></div>
<span class="t" style="left:577.8px;top:322.84px;font-size:12px;line-height:12px;transform:scaleX(0.9933)">Term:</span>
<span class="t" style="left:609.3px;top:322.84px;font-size:12px;line-height:12px;transform:scaleX(0.8608)">X</span>
<span class="t" style="left:555.4px;top:338.84px;font-size:12px;line-height:12px;transform:scaleX(0.9545)">FileName:</span>
<span class="t" style="left:609.3px;top:338.84px;font-size:12px;line-height:12px;transform:scaleX(0.9686)">D</span>
<span class="t" style="left:560.0px;top:354.84px;font-size:12px;line-height:12px;transform:scaleX(0.9517)">Estimate:</span>
<span class="t" style="left:609.3px;top:354.84px;font-size:12px;line-height:12px;transform:scaleX(0.9522)">0.6429</span>
<svg style="position:absolute;left:546px;top:318px" width="209" height="215" viewBox="0 0 209 215" font-family="'Liberation Sans', sans-serif"><rect x="16.5" y="65.5" width="168" height="133" fill="#fff" stroke="#d9d9d9"/><text x="94" y="63.6" font-size="5" font-weight="bold" text-anchor="middle" fill="#111">Y vs. X</text><path d="M14.5 179.9h2" stroke="#aaa" stroke-width=".6"/><text x="12.8" y="181.5" font-size="4.5" text-anchor="end" fill="#454545">1</text><path d="M14.5 142.3h2" stroke="#aaa" stroke-width=".6"/><text x="12.8" y="143.9" font-size="4.5" text-anchor="end" fill="#454545">2</text><path d="M14.5 104.7h2" stroke="#aaa" stroke-width=".6"/><text x="12.8" y="106.3" font-size="4.5" text-anchor="end" fill="#454545">3</text><path d="M14.5 67.1h2" stroke="#aaa" stroke-width=".6"/><text x="12.8" y="68.7" font-size="4.5" text-anchor="end" fill="#454545">4</text><path d="M15.5 161.1h1" stroke="#bbb" stroke-width=".6"/><path d="M15.5 123.5h1" stroke="#bbb" stroke-width=".6"/><path d="M15.5 85.9h1" stroke="#bbb" stroke-width=".6"/><path d="M27.0 198.5v2" stroke="#aaa" stroke-width=".6"/><text x="27.0" y="206.3" font-size="4.5" text-anchor="middle" fill="#454545">1</text><path d="M51.2 198.5v2" stroke="#aaa" stroke-width=".6"/><text x="51.2" y="206.3" font-size="4.5" text-anchor="middle" fill="#454545">2</text><path d="M75.5 198.5v2" stroke="#aaa" stroke-width=".6"/><text x="75.5" y="206.3" font-size="4.5" text-anchor="middle" fill="#454545">3</text><path d="M99.8 198.5v2" stroke="#aaa" stroke-width=".6"/><text x="99.8" y="206.3" font-size="4.5" text-anchor="middle" fill="#454545">4</text><path d="M124.0 198.5v2" stroke="#aaa" stroke-width=".6"/><text x="124.0" y="206.3" font-size="4.5" text-anchor="middle" fill="#454545">5</text><path d="M148.2 198.5v2" stroke="#aaa" stroke-width=".6"/><text x="148.2" y="206.3" font-size="4.5" text-anchor="middle" fill="#454545">6</text><path d="M172.5 198.5v2" stroke="#aaa" stroke-width=".6"/><text x="172.5" y="206.3" font-size="4.5" text-anchor="middle" fill="#454545">7</text><text x="100" y="211.3" font-size="4.2" text-anchor="middle" fill="#454545">X</text><text x="8" y="133.5" font-size="4.2" text-anchor="middle" fill="#454545">Y</text><path d="M23.4 186.2L103.4 106.4" stroke="#4e6cc2" stroke-width="1.15" fill="none"/><circle cx="27.0" cy="179.9" r=".9" fill="#111"/><circle cx="75.5" cy="142.3" r=".9" fill="#111"/><circle cx="99.8" cy="104.7" r=".9" fill="#111"/><circle cx="188.5" cy="69.3" r=".8" fill="#111"/><text x="193.2" y="70.7" font-size="4.2" fill="#454545">Y</text><path d="M186 74.3h7" stroke="#4a68c4" stroke-width="1"/><text x="193.6" y="75.7" font-size="4.2" fill="#454545">Y</text></svg>
<div style="position:absolute;left:567px;top:107px;width:209px;height:215px;box-sizing:border-box;border:1px solid #b7b7b7;border-radius:3.5px;background:linear-gradient(#fff 0%,#fdfdfd 12%,#f8f8f8 28%,#f4f4f4 100%);overflow:hidden"><div style="position:absolute;right:0;top:0;width:5px;height:213px;background:linear-gradient(rgba(0,0,0,0) 30%,rgba(0,0,0,.04) 55%,rgba(0,0,0,.055))"></div></div>
<span class="t" style="left:598.8px;top:111.84px;font-size:12px;line-height:12px;transform:scaleX(0.9933)">Term:</span>
<span class="t" style="left:630.3px;top:111.84px;font-size:12px;line-height:12px;transform:scaleX(0.8608)">X</span>
<span class="t" style="left:576.4px;top:127.84px;font-size:12px;line-height:12px;transform:scaleX(0.9545)">FileName:</span>
<span class="t" style="left:630.3px;top:127.84px;font-size:12px;line-height:12px;transform:scaleX(0.8533)">C</span>
<span class="t" style="left:581.0px;top:143.84px;font-size:12px;line-height:12px;transform:scaleX(0.9517)">Estimate:</span>
<span class="t" style="left:630.3px;top:143.84px;font-size:12px;line-height:12px;transform:scaleX(0.9312)">2.0</span>
<svg style="position:absolute;left:567px;top:107px" width="209" height="215" viewBox="0 0 209 215" font-family="'Liberation Sans', sans-serif"><rect x="16.5" y="65.5" width="168" height="133" fill="#fff" stroke="#d9d9d9"/><text x="94" y="63.6" font-size="5" font-weight="bold" text-anchor="middle" fill="#111">Y vs. X</text><path d="M14.5 179.9h2" stroke="#aaa" stroke-width=".6"/><text x="12.8" y="181.5" font-size="4.5" text-anchor="end" fill="#454545">1</text><path d="M14.5 142.3h2" stroke="#aaa" stroke-width=".6"/><text x="12.8" y="143.9" font-size="4.5" text-anchor="end" fill="#454545">2</text><path d="M14.5 104.7h2" stroke="#aaa" stroke-width=".6"/><text x="12.8" y="106.3" font-size="4.5" text-anchor="end" fill="#454545">3</text><path d="M14.5 67.1h2" stroke="#aaa" stroke-width=".6"/><text x="12.8" y="68.7" font-size="4.5" text-anchor="end" fill="#454545">4</text><path d="M15.5 161.1h1" stroke="#bbb" stroke-width=".6"/><path d="M15.5 123.5h1" stroke="#bbb" stroke-width=".6"/><path d="M15.5 85.9h1" stroke="#bbb" stroke-width=".6"/><path d="M27.0 198.5v2" stroke="#aaa" stroke-width=".6"/><text x="27.0" y="206.3" font-size="4.5" text-anchor="middle" fill="#454545">1</text><path d="M51.2 198.5v2" stroke="#aaa" stroke-width=".6"/><text x="51.2" y="206.3" font-size="4.5" text-anchor="middle" fill="#454545">2</text><path d="M75.5 198.5v2" stroke="#aaa" stroke-width=".6"/><text x="75.5" y="206.3" font-size="4.5" text-anchor="middle" fill="#454545">3</text><path d="M99.8 198.5v2" stroke="#aaa" stroke-width=".6"/><text x="99.8" y="206.3" font-size="4.5" text-anchor="middle" fill="#454545">4</text><path d="M124.0 198.5v2" stroke="#aaa" stroke-width=".6"/><text x="124.0" y="206.3" font-size="4.5" text-anchor="middle" fill="#454545">5</text><path d="M148.2 198.5v2" stroke="#aaa" stroke-width=".6"/><text x="148.2" y="206.3" font-size="4.5" text-anchor="middle" fill="#454545">6</text><path d="M172.5 198.5v2" stroke="#aaa" stroke-width=".6"/><text x="172.5" y="206.3" font-size="4.5" text-anchor="middle" fill="#454545">7</text><text x="100" y="211.3" font-size="4.2" text-anchor="middle" fill="#454545">X</text><text x="8" y="133.5" font-size="4.2" text-anchor="middle" fill="#454545">Y</text><path d="M38.2 182.9L64.3 101.7" stroke="#4e6cc2" stroke-width="1.15" fill="none"/><circle cx="39.1" cy="179.9" r=".9" fill="#111"/><circle cx="51.2" cy="142.3" r=".9" fill="#111"/><circle cx="63.4" cy="104.7" r=".9" fill="#111"/><circle cx="188.5" cy="69.3" r=".8" fill="#111"/><text x="193.2" y="70.7" font-size="4.2" fill="#454545">Y</text><path d="M186 74.3h7" stroke="#4a68c4" stroke-width="1"/><text x="193.6" y="75.7" font-size="4.2" fill="#454545">Y</text></svg>
<span class="t" style="left:7.0px;top:561.92px;font-size:12.5px;line-height:12.5px;color:#3f477d;transform:scaleX(0.9521)">evaluations done</span>
<div style="position:absolute;left:740px;top:558px;width:1px;height:20px;background:#7a80a0"></div>
<svg style="position:absolute;left:746px;top:561px" width="16" height="16" viewBox="0 0 16 16"><path d="M2.100 5.800L6.100 2.200l4 3.600V12H2.100z" fill="#fbfcfe" stroke="#5a9ad8" stroke-width=".8"/><path d="M.5 6.300L6.100 1.200l5.600 5.100" fill="none" stroke="#3c94e0" stroke-width="1.700" stroke-linejoin="round" stroke-linecap="round"/><path d="M1.600 6.300L6.100 2.300l4.500 4" fill="none" stroke="#a8d4f6" stroke-width=".7"/><rect x="4.700" y="7.200" width="2.400" height="4.600" fill="#a86a1c"/><rect x="5.300" y="8.600" width="1" height="1.600" fill="#e8c070"/></svg>
<svg style="position:absolute;left:762px;top:561px" width="16" height="16" viewBox="0 0 16 16"><rect x=".8" y="1.300" width="10.600" height="9.400" fill="#fff" stroke="#1d5ba8" stroke-width="1.100"/><path d="M.8 2.700h10.600" stroke="#e05858" stroke-width="1"/><path d="M.8 4.600h10.600M.8 6.600h10.600M.8 8.600h10.600" stroke="#88a8e0" stroke-width=".6"/><path d="M3.600 1.300v9.400M6.200 1.300v9.400M8.800 1.300v9.400" stroke="#5a8ad0" stroke-width=".6"/><path d="M9.300 5.400l1 2.500 2.900.8-2.800 1-1.100 3-.9-3-2.900-.9 2.900-.9z" fill="#2888e0"/><circle cx="7.300" cy="5.400" r="1.100" fill="#111"/></svg>
<div style="position:absolute;left:786px;top:561px;width:14px;height:13px;box-sizing:border-box;background:#fff;border:1px solid #6a6a6a"></div>
<svg style="position:absolute;left:806px;top:564px" width="8" height="6" viewBox="0 0 8 6"><path d="M0 0h8L4 5.600z" fill="#000"/></svg>
<svg style="position:absolute;left:826px;top:566px" width="12" height="12" viewBox="0 0 12 12" fill="#b9bdd0"><rect x="9" y="0" width="2" height="2"/><rect x="6" y="3" width="2" height="2"/><rect x="9" y="3" width="2" height="2"/><rect x="3" y="6" width="2" height="2"/><rect x="6" y="6" width="2" height="2"/><rect x="9" y="6" width="2" height="2"/><rect x="0" y="9" width="2" height="2"/><rect x="3" y="9" width="2" height="2"/><rect x="6" y="9" width="2" height="2"/><rect x="9" y="9" width="2" height="2"/></svg>
</div></body></html>
